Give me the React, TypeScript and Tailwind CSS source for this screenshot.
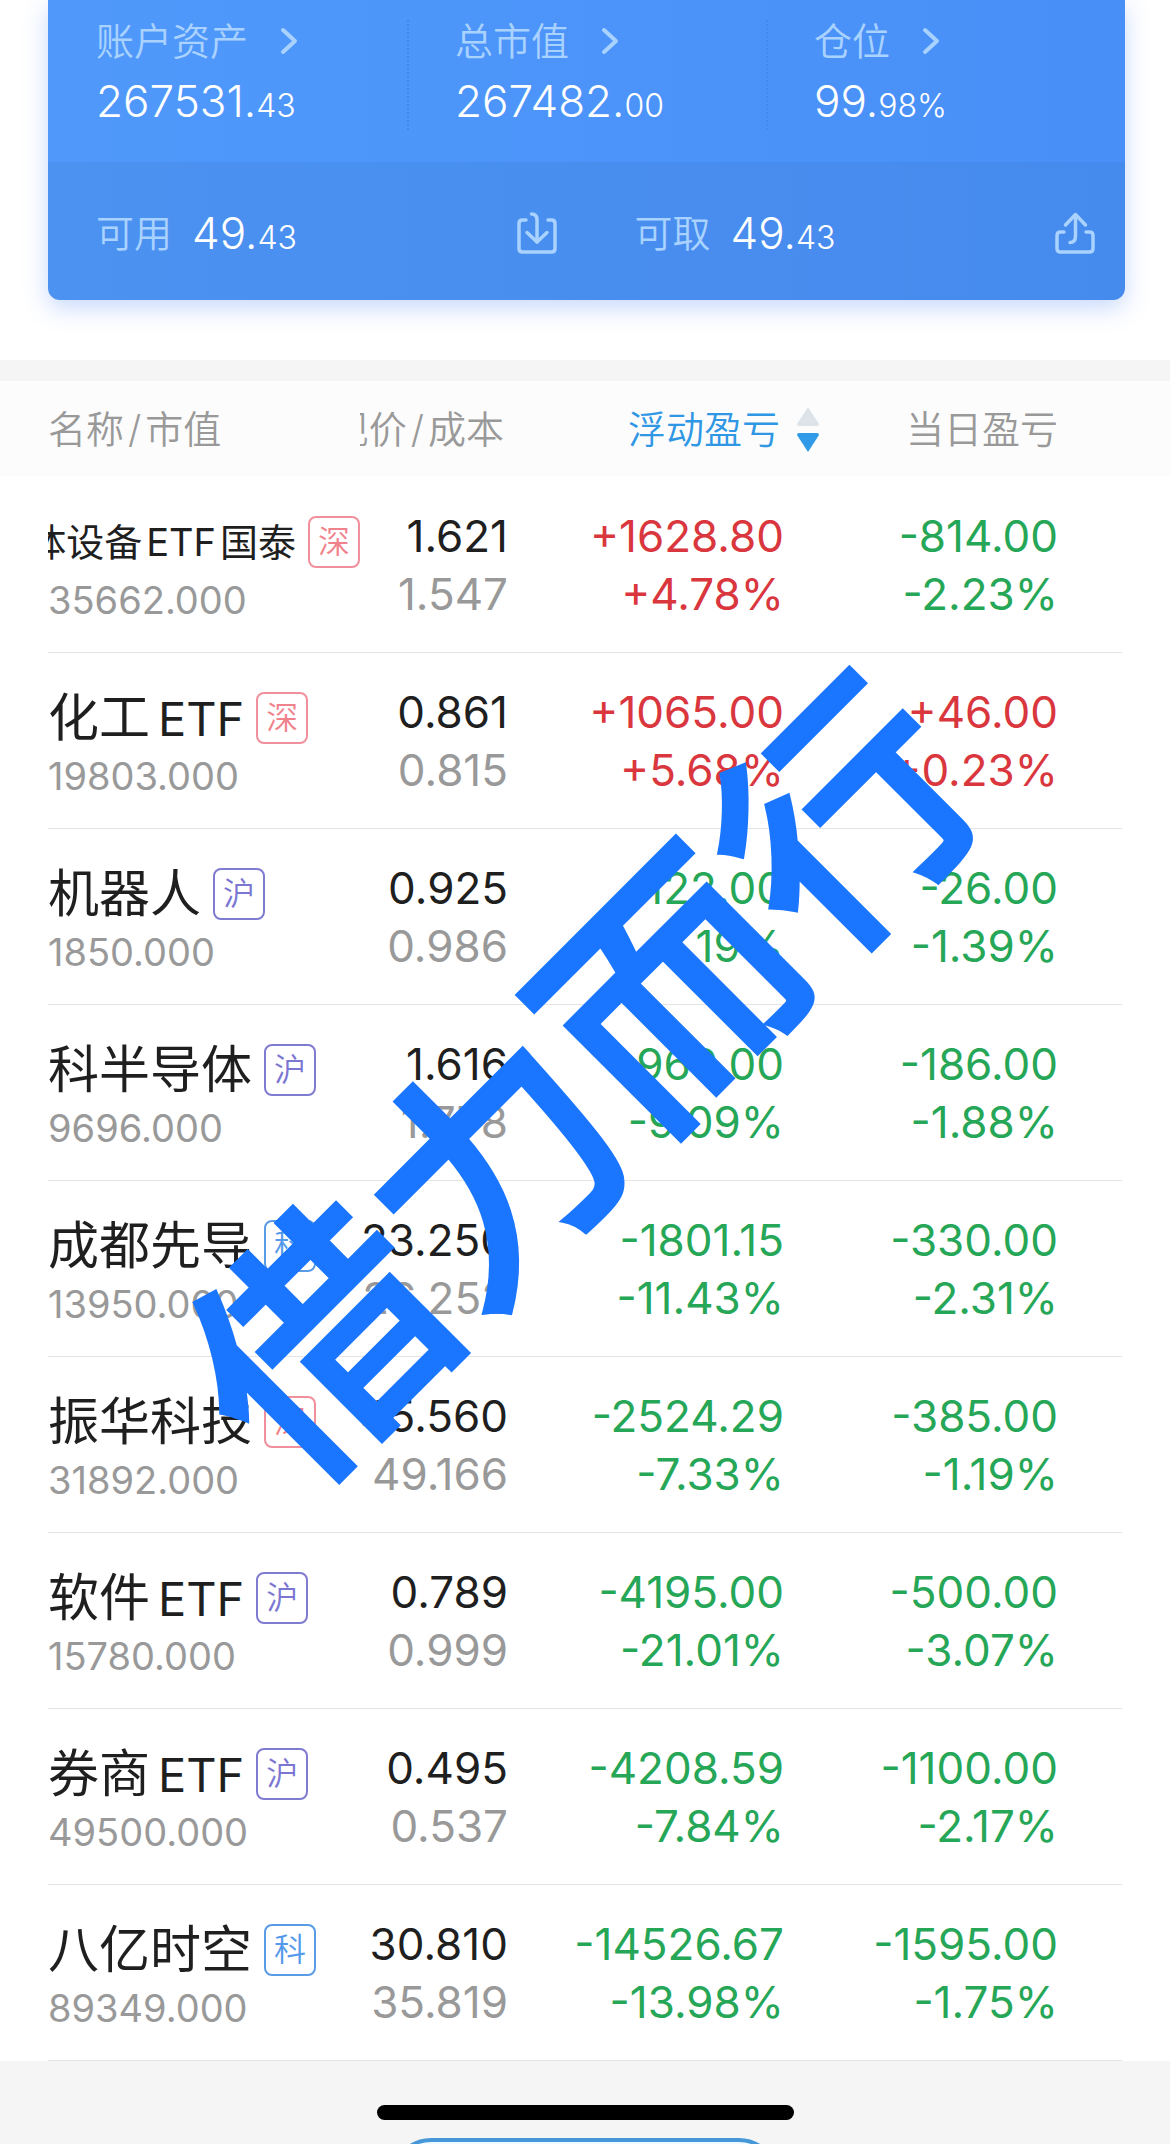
import React from 'react';

type Market = '深' | '沪' | '科';

interface Holding {
  name: string;
  market: Market;
  value: string;
  price: string;
  cost: string;
  profit: string;
  profitRate: string;
  dayProfit: string;
  dayRate: string;
}

const HOLDINGS: Holding[] = [
  { name: '半导体设备ETF国泰', market: '深', value: '35662.000', price: '1.621', cost: '1.547', profit: '+1628.80', profitRate: '+4.78%', dayProfit: '-814.00', dayRate: '-2.23%' },
  { name: '化工ETF', market: '深', value: '19803.000', price: '0.861', cost: '0.815', profit: '+1065.00', profitRate: '+5.68%', dayProfit: '+46.00', dayRate: '+0.23%' },
  { name: '机器人', market: '沪', value: '1850.000', price: '0.925', cost: '0.986', profit: '-122.00', profitRate: '-6.19%', dayProfit: '-26.00', dayRate: '-1.39%' },
  { name: '科半导体', market: '沪', value: '9696.000', price: '1.616', cost: '1.778', profit: '-969.00', profitRate: '-9.09%', dayProfit: '-186.00', dayRate: '-1.88%' },
  { name: '成都先导', market: '科', value: '13950.000', price: '23.250', cost: '26.252', profit: '-1801.15', profitRate: '-11.43%', dayProfit: '-330.00', dayRate: '-2.31%' },
  { name: '振华科技', market: '深', value: '31892.000', price: '45.560', cost: '49.166', profit: '-2524.29', profitRate: '-7.33%', dayProfit: '-385.00', dayRate: '-1.19%' },
  { name: '软件ETF', market: '沪', value: '15780.000', price: '0.789', cost: '0.999', profit: '-4195.00', profitRate: '-21.01%', dayProfit: '-500.00', dayRate: '-3.07%' },
  { name: '券商ETF', market: '沪', value: '49500.000', price: '0.495', cost: '0.537', profit: '-4208.59', profitRate: '-7.84%', dayProfit: '-1100.00', dayRate: '-2.17%' },
  { name: '八亿时空', market: '科', value: '89349.000', price: '30.810', cost: '35.819', profit: '-14526.67', profitRate: '-13.98%', dayProfit: '-1595.00', dayRate: '-1.75%' },
];

const MARKET_COLORS: Record<Market, string> = {
  深: 'border-[#f0909c] text-[#f0828c]',
  沪: 'border-[#7f7bd0] text-[#7a76d2]',
  科: 'border-[#5a9be6] text-[#5499ea]',
};

const SUMMARY = [
  { label: '账户资产', whole: '267531.', rest: '43' },
  { label: '总市值', whole: '267482.', rest: '00' },
  { label: '仓位', whole: '99.', rest: '98%' },
];

const Amount: React.FC<{ whole: string; rest: string }> = ({ whole, rest }) => (
  <div className="text-[44px] leading-[58px] font-[350] text-white">
    {whole}
    <span className="text-[32px] leading-none">{rest}</span>
  </div>
);

const ChevronIcon: React.FC = () => (
  <svg className="h-7 w-[18px]" viewBox="0 0 18 28" fill="none" stroke="currentColor" strokeWidth="4" strokeLinecap="round" strokeLinejoin="round">
    <path d="M3 3l12 11L3 25" />
  </svg>
);

const TransferInIcon: React.FC = () => (
  <svg className="h-11 w-10" viewBox="0 0 40 44" fill="none" stroke="currentColor" strokeWidth="3.500" strokeLinecap="round" strokeLinejoin="round">
    <path d="M9 9H5.500Q2 9 2 12.500V37.500Q2 41 5.500 41H34.500Q38 41 38 37.500V12.500Q38 9 34.500 9H31" />
    <path d="M14.500 3Q20 3 20 9V31" />
    <path d="M10 21.500L20 31L30 21.500" />
  </svg>
);

const TransferOutIcon: React.FC = () => (
  <svg className="h-11 w-10" viewBox="0 0 40 44" fill="none" stroke="currentColor" strokeWidth="3.500" strokeLinecap="round" strokeLinejoin="round">
    <path d="M9 21H5.500Q2 21 2 24.500V37.500Q2 41 5.500 41H34.500Q38 41 38 37.500V24.500Q38 21 34.500 21H31" />
    <path d="M15 31.500Q20.500 31.500 20.500 25V4" />
    <path d="M10.500 14L20.500 3.500L30.500 14" />
  </svg>
);

const AccountCard: React.FC = () => (
  <section className="overflow-hidden rounded-b-xl bg-linear-to-r from-[#5099fb] to-[#488ff7] shadow-[0_8px_24px_rgba(72,130,246,0.3)]">
    <div className="grid grid-cols-3 pt-5 pb-8">
      {SUMMARY.map((item, idx) => (
        <div key={item.label} className={idx > 0 ? 'border-l-2 border-dotted border-[#4289ec] pl-[46px]' : 'pl-12'}>
          <button type="button" className="flex items-center gap-8 text-[38px] leading-[42px] font-[350] text-[#a9d2ff]">
            {item.label}
            <ChevronIcon />
          </button>
          <div className="pt-2.5">
            <Amount whole={item.whole} rest={item.rest} />
          </div>
        </div>
      ))}
    </div>
    <div className="grid grid-cols-2 bg-[#3c78c8]/20 pt-[42px] pb-[38px] text-[#a9d2ff]">
      <div className="flex items-center justify-between pr-[30px] pl-12">
        <div className="flex items-center gap-5">
          <span className="text-[38px] leading-[58px] font-[350]">可用</span>
          <Amount whole="49." rest="43" />
        </div>
        <button type="button" aria-label="转入">
          <TransferInIcon />
        </button>
      </div>
      <div className="flex items-center justify-between pr-[30px] pl-12">
        <div className="flex items-center gap-5">
          <span className="text-[38px] leading-[58px] font-[350]">可取</span>
          <Amount whole="49." rest="43" />
        </div>
        <button type="button" aria-label="转出">
          <TransferOutIcon />
        </button>
      </div>
    </div>
  </section>
);

const profitColor = (text: string) => (text.startsWith('+') ? 'text-[#d9363e]' : 'text-[#26a657]');

const HoldingRow: React.FC<{ item: Holding }> = ({ item }) => {
  const long = item.name.length > 6;
  const [before, after] = item.name.split('ETF');

  return (
    <tr className="border-b border-[#e4e4e4]">
      <td className="pt-[35px] pb-6">
        <div className={long ? 'flex items-center justify-end gap-3 overflow-hidden' : 'flex items-center gap-3'}>
          <span className={long ? 'text-[38px] leading-[60px] whitespace-nowrap' : 'text-[51px] leading-[60px] whitespace-nowrap'}>
            {before}
            {after !== undefined && <span className={after ? 'mx-1' : 'ml-2 text-[47px] leading-none'}>ETF</span>}
            {after}
          </span>
          <span className={`flex size-[52px] shrink-0 items-center justify-center rounded-lg border-2 text-[32px] leading-none font-[350] ${MARKET_COLORS[item.market]}`}>
            {item.market}
          </span>
        </div>
        <div className="text-[38px] leading-[56px] text-[#999999]">{item.value}</div>
      </td>
      <td className="text-right text-[44px] leading-[58px]">
        <div>{item.price}</div>
        <div className="text-[#999999]">{item.cost}</div>
      </td>
      <td className={`pr-12 text-right text-[44px] leading-[58px] ${profitColor(item.profit)}`}>
        <div>{item.profit}</div>
        <div>{item.profitRate}</div>
      </td>
      <td className={`pr-16 text-right text-[44px] leading-[58px] ${profitColor(item.dayProfit)}`}>
        <div>{item.dayProfit}</div>
        <div>{item.dayRate}</div>
      </td>
    </tr>
  );
};

const App: React.FC = () => {
  return (
    <main className="relative overflow-hidden bg-white font-['Inter','Noto_Sans_CJK_SC',sans-serif] text-[#1f1f1f]">
      <div className="pr-[45px] pb-15 pl-12">
        <AccountCard />
      </div>

      <div className="border-t-[21px] border-[#f5f5f5] bg-linear-to-b from-[#fcfcfc] from-[95px] to-white to-[95px] px-12">
        <table className="w-full table-fixed border-collapse">
          <colgroup>
            <col className="w-[312px]" />
            <col className="w-[148px]" />
            <col className="w-[324px]" />
            <col />
          </colgroup>
          <thead>
            <tr className="h-24 text-[38px] leading-[58px] text-[#999999]">
              <th className="text-left font-[350]">
                名称<span className="mx-1">/</span>市值
              </th>
              <th className="font-[350]">
                <div className="flex justify-end overflow-hidden pr-1 whitespace-nowrap">
                  现价<span className="mx-1">/</span>成本
                </div>
              </th>
              <th className="font-[350]">
                <button type="button" className="flex w-full items-center justify-end gap-4 pr-3 text-[#2f97e4]">
                  浮动盈亏
                  <svg className="h-12 w-6" viewBox="0 0 24 48">
                    <path d="M12 2L23 19Q23 21 21 21H3Q1 21 1 19Z" fill="#dce4ea" />
                    <path d="M12 47L23 30Q23 28 21 28H3Q1 28 1 30Z" fill="#2f9be8" />
                  </svg>
                </button>
              </th>
              <th className="pr-16 text-right font-[350]">当日盈亏</th>
            </tr>
          </thead>
          <tbody>
            {HOLDINGS.map((item) => (
              <HoldingRow key={item.name} item={item} />
            ))}
          </tbody>
        </table>
      </div>

      <footer className="flex h-[83px] flex-col items-center gap-[18px] overflow-hidden bg-[#f5f5f5] pt-11">
        <div className="h-[15px] w-[417px] shrink-0 rounded-full bg-black" />
        <button type="button" aria-label="更多" className="h-20 w-[388px] shrink-0 rounded-full border-4 border-[#4597d8] bg-[#edf8ff]" />
      </footer>

      {/* Watermark across the list */}
      <div className="pointer-events-none absolute inset-0 flex items-center justify-center pt-4">
        <span className="-rotate-45 text-[248px] leading-none font-medium whitespace-nowrap text-[#1a75ff] [-webkit-text-stroke:4px_#1a75ff]">借力而行</span>
      </div>
    </main>
  );
};

export default App;
